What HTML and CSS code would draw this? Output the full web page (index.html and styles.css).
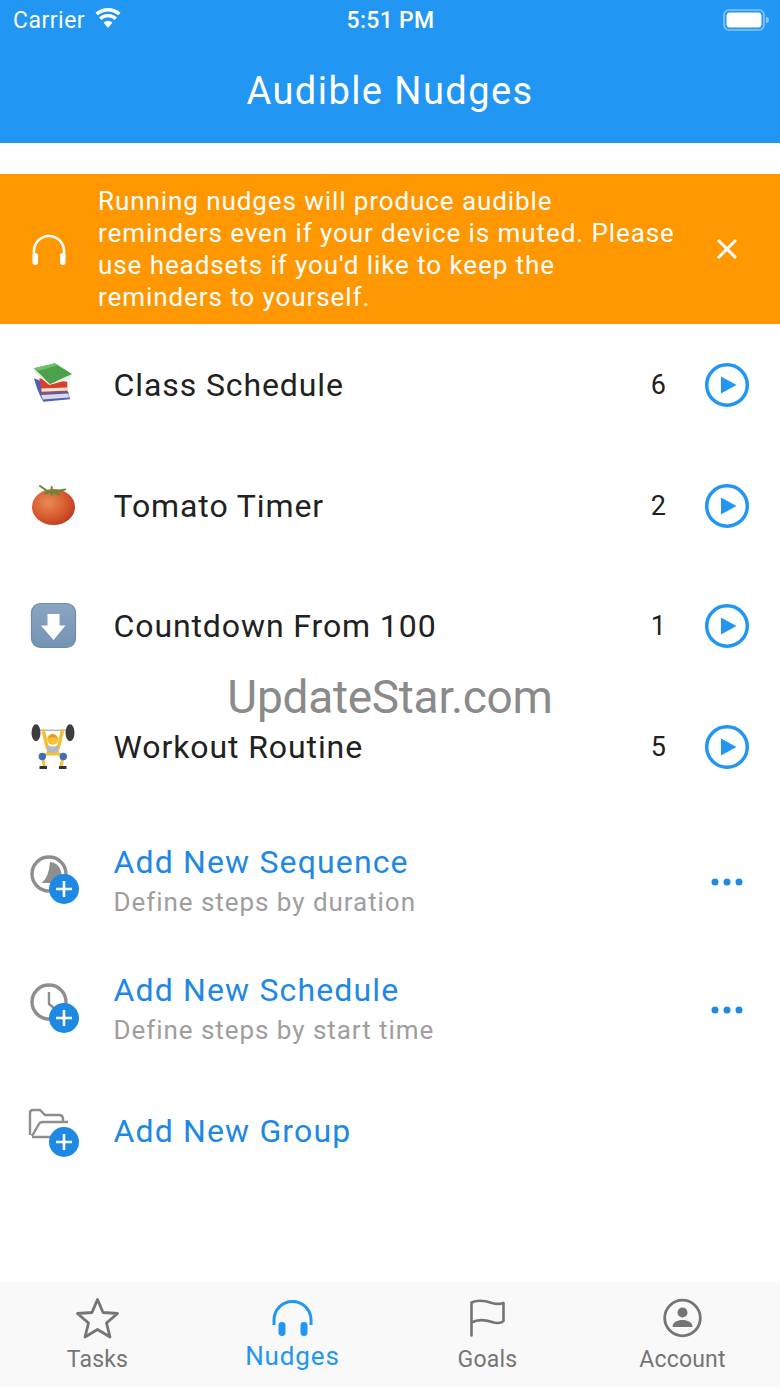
FILE: index.html
```html
<!DOCTYPE html>
<html lang="en">
<head>
<meta charset="utf-8">
<title>Audible Nudges</title>
<link rel="stylesheet" href="styles.css">
</head>
<body>
<div class="app">
  <header class="header">
    <div class="status">
      <div class="status-left">
        <span class="carrier">Carrier</span>
        <svg class="wifi" width="28" height="22" viewBox="0 0 28 22"><path d="M14 21 L9.6 15.6 A7 7 0 0 1 18.4 15.6 Z" fill="#fff"/><path d="M6.2 11.6 A11.8 11.8 0 0 1 21.8 11.6 M2.6 7 A17.6 17.6 0 0 1 25.4 7" fill="none" stroke="#fff" stroke-width="3.4"/></svg>
      </div>
      <span class="time">5:51 PM</span>
      <svg class="battery" width="46" height="22" viewBox="0 0 46 22"><rect x="1" y="1" width="40" height="20" rx="5" fill="none" stroke="#8cc6f7" stroke-width="1.6"/><rect x="3.5" y="3.5" width="35" height="15" rx="3" fill="#fff"/><path d="M43 8 a3 3 0 0 1 0 6 Z" fill="#8cc6f7"/></svg>
    </div>
    <h1 class="title">Audible Nudges</h1>
  </header>

  <section class="banner">
    <svg class="banner-icon" width="36" height="32" viewBox="0 0 36 32"><path d="M3 24 V17 A15 15 0 0 1 33 17 V24" fill="none" stroke="#fff" stroke-width="2.6"/><rect x="1.500" y="19" width="5.500" height="12" rx="2.700" fill="#fff"/><rect x="29" y="19" width="5.500" height="12" rx="2.700" fill="#fff"/></svg>
    <p class="banner-text">Running nudges will produce audible reminders even if your device is muted. Please use headsets if you'd like to keep the reminders to yourself.</p>
    <svg class="banner-close" width="24" height="24" viewBox="0 0 24 24"><path d="M3 3 L21 21 M21 3 L3 21" stroke="#fff" stroke-width="3" fill="none"/></svg>
  </section>

  <ul class="list">
    <li class="row">
      <svg class="glyph" width="60" height="60" viewBox="0 0 60 60">
        <path d="M8 23.300 L42.300 36.700 L44 44.300 L17.300 46.700 Q11 36 8 23.300Z" fill="#4d5fb5"/><path d="M15 40 L42.500 38.500 L43 42.500 L17 44.500Z" fill="#d8dae6"/>
        <path d="M13.300 23.300 L41.300 26.700 L41.300 36.700 L15.700 38.300Z" fill="#d9402c"/><path d="M15.300 33.500 L41.300 32.500 L41.300 35.500 L15.700 36.800Z" fill="#f3e8de"/>
        <path d="M8 13.300 L9 18.300 L23.300 30 L44 24.300 L46 19 L24 29Z" fill="#e8ece6"/>
        <path d="M8 13.300 L29 8.300 L46 19 L24 29Z" fill="#4ba04b"/><path d="M8 13.300 L29 8.300 L32 10.300 L12 16Z" fill="#6fbe68"/>
      </svg>
      <span class="name">Class Schedule</span>
      <span class="count">6</span>
      <svg class="play" width="48" height="48" viewBox="0 0 48 48"><circle cx="24" cy="24" r="20.300" fill="none" stroke="#2196f3" stroke-width="3.500"/><path d="M18 15.500 L33.500 24 L18 32.500Z" fill="#2196f3"/></svg>
    </li>
    <li class="row">
      <svg class="glyph" width="60" height="60" viewBox="0 0 60 60">
        <defs><radialGradient id="tom" cx="38%" cy="38%" r="70%"><stop offset="0" stop-color="#e88a55"/><stop offset=".6" stop-color="#d85a2e"/><stop offset="1" stop-color="#b83a1e"/></radialGradient></defs>
        <ellipse cx="27.500" cy="31" rx="21.500" ry="18" fill="url(#tom)"/>
        <path d="M14 10 L22 15.500 M25.700 11 L25.700 19 M39 13.500 L29 15.500 M19 17.500 L25.700 15.500 L33 18.500" fill="none" stroke="#5e8a34" stroke-width="2" stroke-linecap="round"/>
      </svg>
      <span class="name">Tomato Timer</span>
      <span class="count">2</span>
      <svg class="play" width="48" height="48" viewBox="0 0 48 48"><circle cx="24" cy="24" r="20.300" fill="none" stroke="#2196f3" stroke-width="3.500"/><path d="M18 15.500 L33.500 24 L18 32.500Z" fill="#2196f3"/></svg>
    </li>
    <li class="row">
      <svg class="glyph" width="60" height="60" viewBox="0 0 60 60">
        <defs><linearGradient id="box" x1="0" y1="0" x2="0" y2="1"><stop offset="0" stop-color="#8aa5c2"/><stop offset="1" stop-color="#7493b3"/></linearGradient></defs>
        <rect x="5.500" y="7.500" width="44" height="44" rx="9" fill="url(#box)" stroke="#6f8aa6" stroke-width="1.200"/>
        <path d="M21.500 18 H33.500 V29.500 H39.500 L27.500 44 L15 29.500 H21.500Z" fill="#fff"/>
      </svg>
      <span class="name">Countdown From 100</span>
      <span class="count">1</span>
      <svg class="play" width="48" height="48" viewBox="0 0 48 48"><circle cx="24" cy="24" r="20.300" fill="none" stroke="#2196f3" stroke-width="3.500"/><path d="M18 15.500 L33.500 24 L18 32.500Z" fill="#2196f3"/></svg>
    </li>
    <li class="row">
      <svg class="glyph" width="60" height="60" viewBox="0 0 60 60">
        <path d="M13 13.300 H42" stroke="#b8b8b8" stroke-width="1.600"/>
        <ellipse cx="10" cy="15.700" rx="4.500" ry="8.500" fill="#3d3d3d"/><ellipse cx="44" cy="15.700" rx="4.500" ry="8.500" fill="#3d3d3d"/>
        <path d="M17.300 14 L21.300 31 M36.300 14 L32.300 31" fill="none" stroke="#f5c033" stroke-width="3.400" stroke-linecap="round"/>
        <circle cx="26.700" cy="22.300" r="5.500" fill="#f5c033"/><path d="M21.500 21.500 Q26.700 13 32 21.500 Q26.700 18.500 21.500 21.500Z" fill="#dc9a22"/>
        <path d="M21.500 28 Q26.700 31 32 28 L33 38 H20.500Z" fill="#b5b8bf"/>
        <path d="M20.500 37 H33 L37.300 39 L35 49 M20.500 37 L16.300 39 L18.300 49" fill="none" stroke="#f5c033" stroke-width="3"/>
        <circle cx="16.300" cy="39.500" r="3.700" fill="#3f6fb5"/><circle cx="37.300" cy="39.500" r="3.700" fill="#3f6fb5"/>
        <path d="M13.500 50.500 H21 M33 50.500 H40.500" stroke="#333" stroke-width="2.800"/>
      </svg>
      <span class="name">Workout Routine</span>
      <span class="count">5</span>
      <svg class="play" width="48" height="48" viewBox="0 0 48 48"><circle cx="24" cy="24" r="20.300" fill="none" stroke="#2196f3" stroke-width="3.500"/><path d="M18 15.500 L33.500 24 L18 32.500Z" fill="#2196f3"/></svg>
    </li>
  </ul>

  <ul class="actions">
    <li class="action">
      <svg class="glyph" width="60" height="60" viewBox="0 0 60 60">
        <circle cx="23" cy="22" r="17" fill="none" stroke="#8e8e8e" stroke-width="3.400"/>
        <path d="M24 10 A12.500 12.500 0 0 1 32 31 L15.700 31 Q23 25 24 10Z" fill="#8e8e8e"/>
        <circle cx="38" cy="37" r="15" fill="#1e88e5"/><path d="M38 29 V45 M30 37 H46" stroke="#fff" stroke-width="2.600"/>
      </svg>
      <div class="action-text"><span class="action-title">Add New Sequence</span><span class="action-sub">Define steps by duration</span></div>
      <svg class="more" width="32" height="10" viewBox="0 0 32 10"><circle cx="4" cy="5" r="3.500" fill="#1e88e5"/><circle cx="16" cy="5" r="3.500" fill="#1e88e5"/><circle cx="28" cy="5" r="3.500" fill="#1e88e5"/></svg>
    </li>
    <li class="action">
      <svg class="glyph" width="60" height="60" viewBox="0 0 60 60">
        <circle cx="23" cy="22" r="17" fill="none" stroke="#8e8e8e" stroke-width="3.400"/>
        <path d="M23 12 V24 L29 29" fill="none" stroke="#8e8e8e" stroke-width="2.400"/>
        <circle cx="38" cy="38" r="15" fill="#1e88e5"/><path d="M38 30 V46 M30 38 H46" stroke="#fff" stroke-width="2.600"/>
      </svg>
      <div class="action-text"><span class="action-title">Add New Schedule</span><span class="action-sub">Define steps by start time</span></div>
      <svg class="more" width="32" height="10" viewBox="0 0 32 10"><circle cx="4" cy="5" r="3.500" fill="#1e88e5"/><circle cx="16" cy="5" r="3.500" fill="#1e88e5"/><circle cx="28" cy="5" r="3.500" fill="#1e88e5"/></svg>
    </li>
    <li class="action action-single">
      <svg class="glyph" width="60" height="60" viewBox="0 0 60 60">
        <path d="M4 34 V12 Q4 9 7 9 H14 L19 14 H33 Q37 14 37 18 V21 M6 35 L13 23 Q14 21 17 21 H42 M6 36 H26" fill="none" stroke="#8e8e8e" stroke-width="2.400"/>
        <circle cx="38" cy="41" r="15" fill="#1e88e5"/><path d="M38 33 V49 M30 41 H46" stroke="#fff" stroke-width="2.600"/>
      </svg>
      <div class="action-text"><span class="action-title">Add New Group</span></div>
    </li>
  </ul>

  <div class="watermark">UpdateStar.com</div>

  <nav class="tabs">
    <div class="tab">
      <svg width="46" height="42" viewBox="0 0 46 42"><path d="M22.500 2.500 L28 15.500 L42.500 16.500 L31.500 26 L35 40 L22.500 32.500 L10 40 L13.500 26 L2.500 16.500 L17 15.500Z" fill="none" stroke="#757575" stroke-width="2.800" stroke-linejoin="round"/></svg>
      <span class="tab-label">Tasks</span>
    </div>
    <div class="tab tab-active">
      <svg width="46" height="42" viewBox="0 0 46 42"><path d="M4 28 V23 A18.500 18.500 0 0 1 41 23 V28" fill="none" stroke="#2196f3" stroke-width="3"/><rect x="8.500" y="25" width="7" height="14" rx="3.400" fill="#2196f3"/><rect x="30.500" y="25" width="7" height="14" rx="3.400" fill="#2196f3"/></svg>
      <span class="tab-label">Nudges</span>
    </div>
    <div class="tab">
      <svg width="46" height="42" viewBox="0 0 46 42"><path d="M6.500 38.500 V5.500 C13 2.500 21 4 27 6 C31 7.200 35 7.200 38.500 6 V24 C36.500 26.500 31 26.500 27 25 C21 23 13 22 6.500 25.500" fill="none" stroke="#757575" stroke-width="2.600" stroke-linecap="round" stroke-linejoin="round"/></svg>
      <span class="tab-label">Goals</span>
    </div>
    <div class="tab">
      <svg width="46" height="42" viewBox="0 0 46 42"><circle cx="22.500" cy="21" r="17.800" fill="none" stroke="#757575" stroke-width="2.800"/><circle cx="22.500" cy="15.500" r="5" fill="#757575"/><path d="M12.500 30 C12.500 25 17.500 23 22.500 23 C27.500 23 32.500 25 32.500 30Z" fill="#757575"/></svg>
      <span class="tab-label">Account</span>
    </div>
  </nav>
</div>
</body>
</html>
```

FILE: styles.css
```css
* { box-sizing: border-box; }
html, body { margin: 0; padding: 0; background: #fff; }
body { font-family: Roboto, "Liberation Sans", sans-serif; }
ul { list-style: none; margin: 0; padding: 0; }

.app {
  position: relative;
  width: 780px;
  height: 1387px;
  display: flex;
  flex-direction: column;
  overflow: hidden;
  background: #fff;
}

.header {
  height: 143px;
  flex: none;
  background: #2196f3;
  color: #fff;
  margin-bottom: 31px;
  display: flex;
  flex-direction: column;
}
.status {
  height: 40px;
  padding: 0 11px 0 13px;
  display: grid;
  grid-template-columns: 1fr auto 1fr;
  align-items: center;
}
.status-left { display: flex; align-items: center; gap: 12px; }
.carrier { font-size: 23px; letter-spacing: 0.5px; }
.wifi { margin-top: -5px; margin-left: -3px; }
.time { font-size: 23px; font-weight: 500; letter-spacing: 0.3px; margin-left: -1px; }
.battery { justify-self: end; }
.title {
  margin: 0;
  flex: 1;
  display: flex;
  align-items: center;
  justify-content: center;
  padding-bottom: 1px;
  font-size: 38px;
  font-weight: 400;
  letter-spacing: 1.45px;
}

.banner {
  flex: none;
  height: 150px;
  background: #ff9800;
  color: #fff;
  display: flex;
  align-items: center;
  padding: 0 41px 0 31px;
}
.banner-icon { flex: none; margin-right: 31px; margin-top: 2px; }
.banner-text {
  margin: 0;
  flex: 1;
  font-size: 26px;
  line-height: 32px;
  letter-spacing: 0.92px;
}
.banner-close { flex: none; margin-left: 36px; }

.list { flex: none; padding-top: 1px; }
.row {
  height: 120.500px;
  display: flex;
  align-items: center;
  padding: 0 29px 0 26px;
}
.glyph { flex: none; margin-right: 28px; }
.name { flex: 1; font-size: 32px; color: #212121; letter-spacing: 0.9px; margin-left: -0.5px; }
.count { font-size: 27px; color: #212121; margin-right: 37px; }
.play { flex: none; }

.actions { flex: none; margin-top: 11px; }
.action {
  height: 128px;
  display: flex;
  align-items: center;
  padding: 0 37px 0 26px;
}
.action-single { height: 114px; }
.action-text { flex: 1; display: flex; flex-direction: column; gap: 8px; margin-left: -0.5px; }
.action-title { font-size: 32px; line-height: 32px; color: #1e88e5; letter-spacing: 1.15px; }
.action-sub { font-size: 26px; line-height: 32px; color: #9e9e9e; letter-spacing: 0.95px; }
.more { flex: none; }

.watermark {
  position: absolute;
  left: 0;
  right: 0;
  top: 668px;
  text-align: center;
  font-size: 46px;
  line-height: 58px;
  color: #8a8a8a;
  letter-spacing: -0.27px;
}

.tabs {
  position: absolute;
  left: 0;
  right: 0;
  bottom: 0;
  height: 105px;
  background: #f9f9f9;
  display: grid;
  grid-template-columns: repeat(4, 1fr);
}
.tab {
  display: flex;
  flex-direction: column;
  align-items: center;
  padding-top: 15px;
  color: #757575;
}
.tab-label { font-size: 23px; line-height: 28px; letter-spacing: 0.2px; margin-top: 7px; }
.tab-active { color: #2196f3; }
.tab-active .tab-label { font-size: 26px; margin-top: 3px; letter-spacing: 0.9px; }
```
